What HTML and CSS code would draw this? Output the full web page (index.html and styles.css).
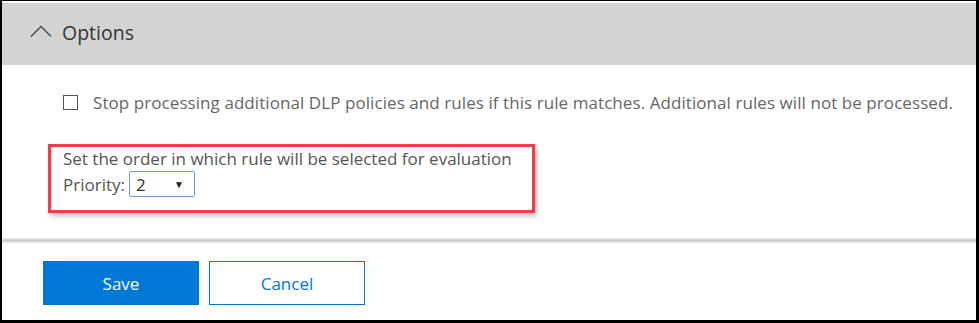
FILE: index.html
```html
<!DOCTYPE html>
<html lang="en">
<head>
  <meta charset="UTF-8">
  <title>Options</title>
  <link rel="stylesheet" href="styles.css">
</head>
<body>
  <div class="frame">
    <div class="section-header">
      <svg class="chevron" width="22" height="12" viewBox="0 0 22 12">
        <polyline points="1,11.5 11,1.5 21,11.5" fill="none" stroke="#444" stroke-width="1.3"/>
      </svg>
      <span class="section-title">Options</span>
    </div>
    <div class="section-body">
      <label class="check-row">
        <span class="checkbox"></span>
        <span class="check-text">Stop processing additional DLP policies and rules if this rule matches. Additional rules will not be processed.</span>
      </label>
      <div class="priority-box">
        <div>Set the order in which rule will be selected for evaluation</div>
        <div class="priority-row">
          <span>Priority:</span>
          <span class="select">2<span class="arrow">&#9660;</span></span>
        </div>
      </div>
    </div>
    <div class="divider"></div>
    <div class="footer">
      <button class="btn btn-primary">Save</button>
      <button class="btn btn-default">Cancel</button>
    </div>
  </div>
</body>
</html>
```
FILE: styles.css
```css
html, body {
  margin: 0;
  padding: 0;
  background: #000;
}

body {
  font-family: "Open Sans", "Noto Sans", sans-serif;
  width: 979px;
  height: 323px;
  overflow: hidden;
}

.frame {
  margin: 1px 3px 0 2px;
  height: 319px;
  background: #fff;
  padding-top: 2px;
  box-sizing: border-box;
  display: flex;
  flex-direction: column;
}

.section-header {
  height: 62px;
  background: #d3d3d3;
  display: flex;
  align-items: center;
  padding-left: 28px;
  flex-shrink: 0;
}

.chevron {
  margin-right: 10px;
  margin-top: -6px;
}

.section-title {
  font-size: 19.5px;
  color: #333;
  margin-top: -3px;
}

.section-body {
  padding: 26px 0 0 46px;
  height: 173px;
  box-sizing: border-box;
  color: #666;
  font-size: 17px;
}

.check-row {
  display: flex;
  align-items: center;
  gap: 15px;
  padding-left: 15px;
}

.check-text {
  letter-spacing: 0.07px;
}

.checkbox {
  width: 13px;
  height: 13px;
  border: 1px solid #555;
  flex-shrink: 0;
}

.priority-box {
  margin-top: 30px;
  width: 469px;
  height: 63px;
  border: 3px solid #f53d4a;
  box-shadow: 2px 3px 5px rgba(0, 0, 0, 0.25);
  padding: 0 0 0 12px;
  box-sizing: content-box;
  color: #555;
  line-height: 23px;
}

.priority-row {
  display: flex;
  align-items: center;
  gap: 4px;
  margin-top: 1px;
}

.select {
  height: 24px;
  border: 1px solid #6b9ee6;
  border-radius: 2px;
  display: flex;
  align-items: center;
  justify-content: space-between;
  padding: 0 6px;
  color: #333;
  font-size: 17px;
  box-sizing: content-box;
  width: 52px;
}

.arrow {
  font-size: 10px;
  color: #222;
  margin-right: 4px;
}

.divider {
  height: 6px;
  background: linear-gradient(#f4f4f4, #c8c8c8 40%, #e6e6e6 70%, #fff);
  flex-shrink: 0;
}

.footer {
  display: flex;
  gap: 10px;
  padding: 17px 0 0 41px;
}

.btn {
  width: 156px;
  height: 44px;
  font-family: inherit;
  font-size: 17px;
  cursor: pointer;
}

.btn-primary {
  background: #0078d7;
  border: none;
  color: #fff;
}

.btn-default {
  background: #fff;
  border: 1px solid #0078d7;
  color: #0078d7;
}
```
